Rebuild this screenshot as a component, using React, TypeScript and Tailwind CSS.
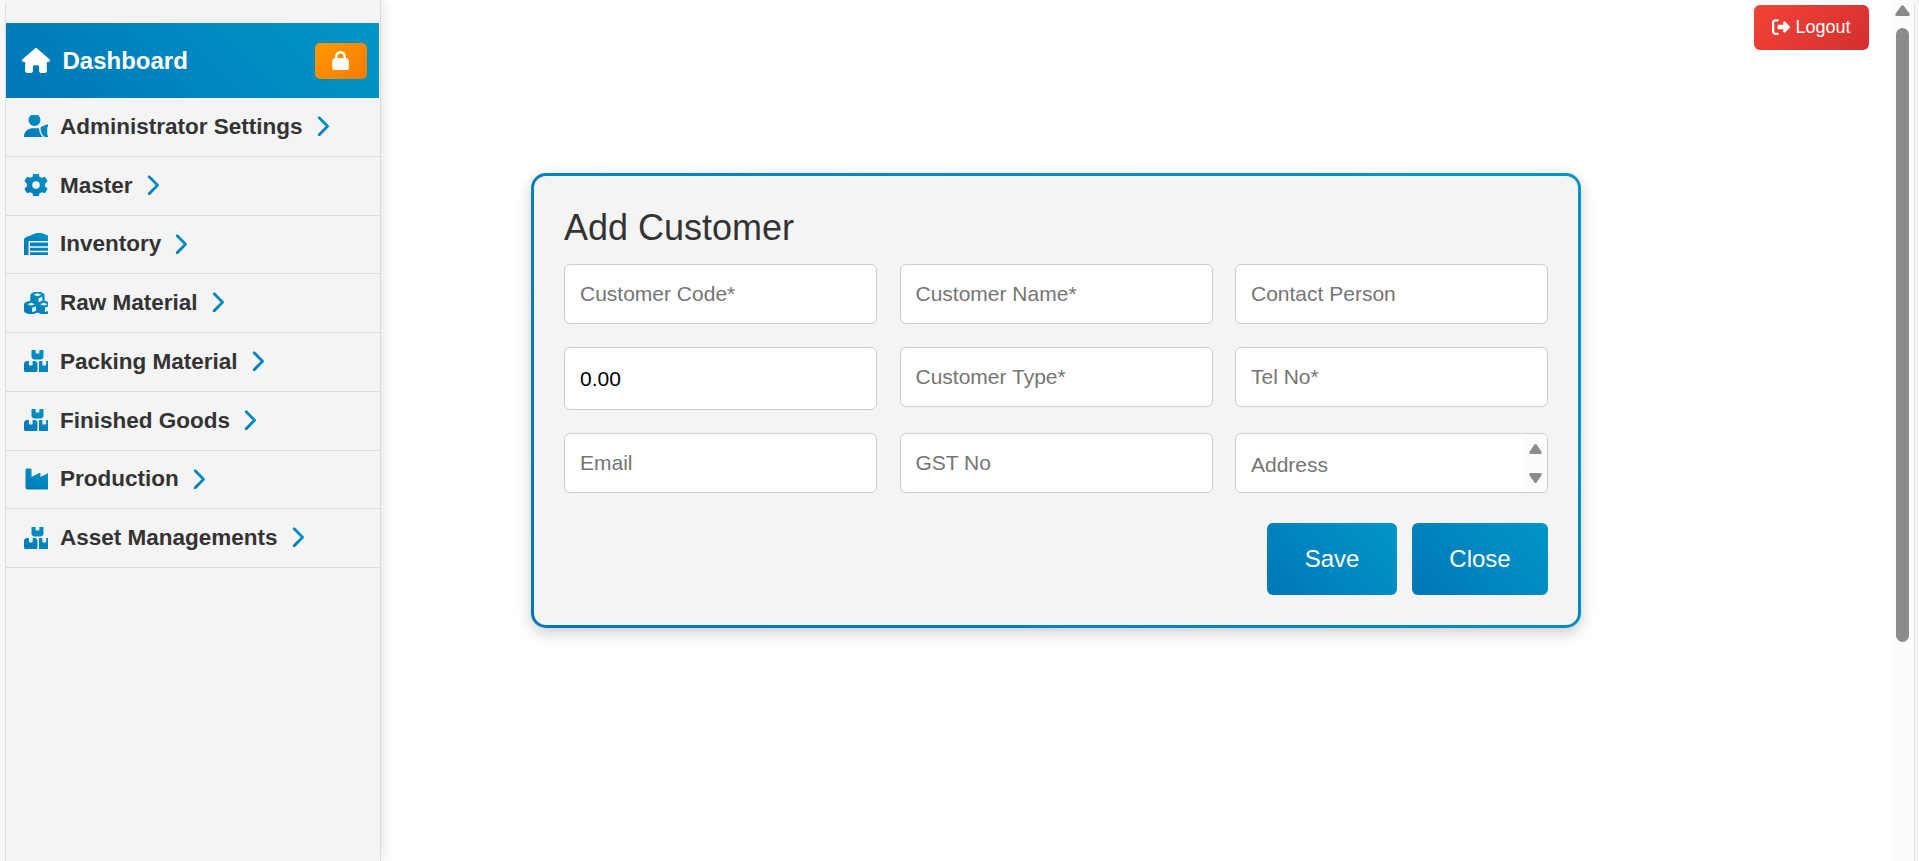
import React from "react";
import {
  FaBoxesStacked,
  FaChevronRight,
  FaCubes,
  FaGear,
  FaHouse,
  FaIndustry,
  FaLock,
  FaRightFromBracket,
  FaUserShield,
  FaWarehouse,
} from "react-icons/fa6";
import type { IconType } from "react-icons";

type Entry = { label: string; icon: IconType; size: string };

const menu: Entry[] = [
  { label: "Administrator Settings", icon: FaUserShield, size: "w-[30px]" },
  { label: "Master", icon: FaGear, size: "w-[24px]" },
  { label: "Inventory", icon: FaWarehouse, size: "w-[30px]" },
  { label: "Raw Material", icon: FaCubes, size: "w-[27px]" },
  { label: "Packing Material", icon: FaBoxesStacked, size: "w-[27px]" },
  { label: "Finished Goods", icon: FaBoxesStacked, size: "w-[27px]" },
  { label: "Production", icon: FaIndustry, size: "w-[27px]" },
  { label: "Asset Managements", icon: FaBoxesStacked, size: "w-[27px]" },
];

function BrandGradient() {
  return (
    <svg width="0" height="0" className="absolute" aria-hidden="true">
      <defs>
        <linearGradient id="brand" x1="0" y1="1" x2="1" y2="0">
          <stop offset="0" stopColor="#0077b6" />
          <stop offset="1" stopColor="#0096c7" />
        </linearGradient>
      </defs>
    </svg>
  );
}

function MenuItem({ label, icon: Icon, size }: Entry) {
  return (
    <li className="flex h-[58.75px] items-center border-b border-[#dcdcdc] pb-px pl-[18px]">
      <span className="flex h-[22px] w-6 shrink-0 items-center overflow-hidden">
        <Icon className={`h-6 max-w-none shrink-0 fill-[url(#brand)] ${size}`} />
      </span>
      <span className="ml-3 text-[22.5px] leading-[27px] font-bold whitespace-nowrap text-[#333]">{label}</span>
      <FaChevronRight className="ml-3 h-[22.5px] w-[14px] shrink-0 fill-[url(#brand)]" />
    </li>
  );
}

function Sidebar() {
  return (
    <aside className="z-10 flex w-[376px] shrink-0 flex-col rounded-tl-[6px] border-x border-[#dcdcdc] bg-[#f4f4f4] pt-[23px] shadow-[3px_0_12px_rgba(0,0,0,0.1)]">
      <div className="mr-px flex h-[75px] items-center bg-linear-45 from-[#0077b6] to-[#0096c7] pr-3 pl-4 text-white">
        <FaHouse className="h-[25px] w-7" />
        <span className="ml-[12.5px] text-2xl font-bold">Dashboard</span>
        <button className="ml-auto flex h-9 w-[52px] items-center justify-center rounded-[5px] bg-linear-135 from-[#ff9800] to-[#f57c00] pr-px pb-px">
          <FaLock className="h-[19px] w-[17px]" />
        </button>
      </div>
      <ul>
        {menu.map((m) => (
          <MenuItem key={m.label} {...m} />
        ))}
      </ul>
    </aside>
  );
}

const fieldClass =
  "w-full rounded-[6px] border border-[#ccc] bg-white px-[15px] text-[21px] text-black outline-none placeholder:text-[#757575] placeholder:opacity-100";

function Field({ placeholder }: { placeholder: string }) {
  return <input className={`${fieldClass} h-[60px]`} placeholder={placeholder} />;
}

function AddressField() {
  return (
    <div className="flex h-[60px] overflow-hidden rounded-[6px] border border-[#ccc] bg-white">
      <textarea
        className="min-w-0 flex-1 resize-none overflow-hidden px-[15px] pt-[17px] text-[21px] leading-[27px] outline-none placeholder:text-[#757575] placeholder:opacity-100"
        placeholder="Address"
      />
      <div className="flex w-[23px] flex-col items-center justify-between bg-[#fcfcfc] pt-[10px] pb-[9px]">
        <svg width="13" height="10" viewBox="0 0 13 10" fill="#8b8b8b">
          <path d="M5.5.6Q6.5-.4 7.5.6L12.5 7.8Q13.2 9.8 11.5 10H1.5Q-.2 9.8.5 7.8Z" />
        </svg>
        <svg width="13" height="10" viewBox="0 0 13 10" fill="#8b8b8b">
          <path d="M5.5 9.4Q6.5 10.4 7.5 9.4L12.5 2.2Q13.2.2 11.5 0H1.5Q-.2.2.5 2.2Z" />
        </svg>
      </div>
    </div>
  );
}

function CustomerCard() {
  return (
    <section className="mt-[173px] ml-[150px] h-[455px] w-[1050px] self-start rounded-[15px] bg-linear-45 from-[#0077b6] to-[#0096c7] p-[3px] shadow-[0_5px_15px_rgba(0,0,0,0.2)]">
      <div className="flex h-full flex-col rounded-[12px] bg-[#f4f4f4] px-[30px] pt-[29px]">
        <h2 className="h-[59px] text-[36px] leading-[45px] text-[#333]">Add Customer</h2>
        <div className="grid grid-cols-[313px_313px_313px] items-start justify-between gap-y-[23px]">
          <Field placeholder="Customer Code*" />
          <Field placeholder="Customer Name*" />
          <Field placeholder="Contact Person" />
          <input className={`${fieldClass} h-[63px]`} defaultValue="0.00" />
          <Field placeholder="Customer Type*" />
          <Field placeholder="Tel No*" />
          <Field placeholder="Email" />
          <Field placeholder="GST No" />
          <AddressField />
        </div>
        <div className="mt-[30px] flex justify-end gap-[15px] text-2xl text-white">
          <button className="h-[72px] w-[130px] rounded-[6px] bg-linear-45 from-[#0077b6] to-[#0096c7]">Save</button>
          <button className="h-[72px] w-[136px] rounded-[6px] bg-linear-45 from-[#0077b6] to-[#0096c7]">Close</button>
        </div>
      </div>
    </section>
  );
}

function PageScrollbar() {
  return (
    <div className="flex w-[23px] shrink-0 flex-col items-center rounded-tr-[6px] bg-[#fcfcfc] pt-[5px]">
      <svg width="15" height="11" viewBox="0 0 15 11" fill="#8b8b8b">
        <path d="M6.3.8Q7.5-.5 8.7.8L14.5 8.6Q15.3 10.8 13.4 11H1.6Q-.3 10.8.5 8.6Z" />
      </svg>
      <div className="mt-3 h-[614px] w-[13px] rounded-full bg-[#8b8b8b]" />
    </div>
  );
}

export default function App() {
  return (
    <div className="flex h-[861px] w-[1919px] overflow-hidden bg-[#f7f7f7] pl-[5px] font-['Liberation_Sans',Arial,sans-serif]">
      <BrandGradient />
      <div className="flex flex-1 overflow-hidden rounded-t-[6px] border-r border-[#e2e2e2] bg-white">
        <Sidebar />
        <main className="flex flex-1 items-start justify-between">
          <CustomerCard />
          <button className="mt-[5px] mr-[22px] flex h-[45px] w-[115px] items-center justify-center gap-[5px] rounded-[6px] bg-linear-135 from-[#f44336] to-[#d32f2f] pb-0.5 text-lg text-white">
            <FaRightFromBracket className="mt-px size-[18px]" />
            Logout
          </button>
        </main>
        <PageScrollbar />
      </div>
      <div className="w-1 shrink-0" />
    </div>
  );
}
